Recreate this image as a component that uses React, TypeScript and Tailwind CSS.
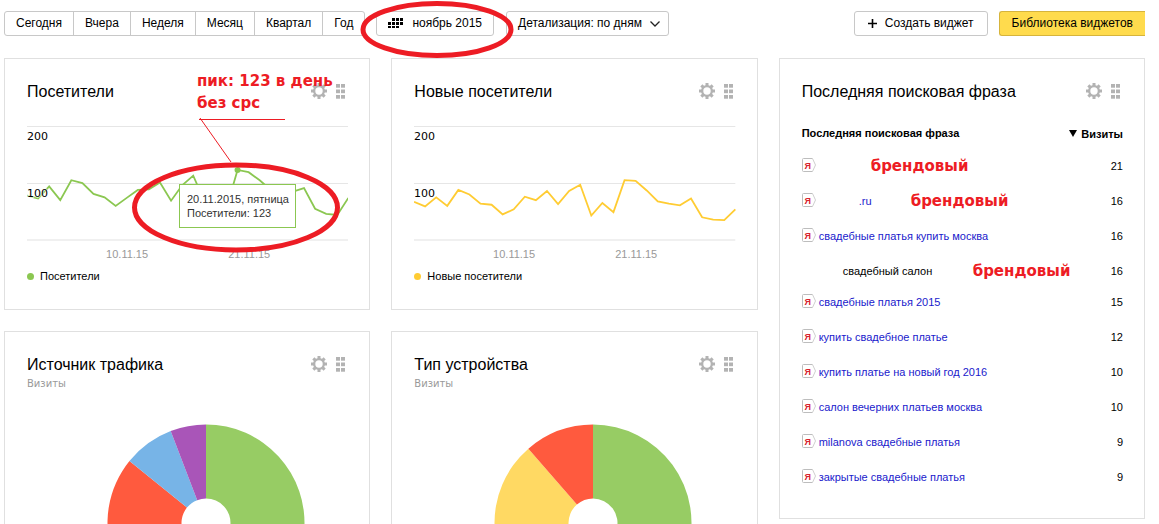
import React from 'react';
import type { ReactNode } from 'react';

const periods = ['Сегодня', 'Вчера', 'Неделя', 'Месяц', 'Квартал', 'Год'];

const visitors = [
  78, 73, 94, 70, 105, 100, 81, 75, 60, 74, 88, 89, 101, 69, 96,
  113, 69, 60, 56, 123, 119, 105, 88, 80, 85, 91, 55, 46, 44, 74,
];

const newVisitors = [
  67, 59, 75, 60, 88, 80, 64, 62, 45, 54, 76, 70, 86, 63, 86,
  97, 43, 65, 49, 105, 104, 87, 68, 64, 61, 73, 40, 36, 35, 54,
];

const sources = [
  { from: 0, to: 190, color: '#97cc64' },
  { from: 190, to: 309, color: '#ff5a3e' },
  { from: 309, to: 339, color: '#77b4e7' },
  { from: 339, to: 360, color: '#a955b8' },
];

const devices = [
  { from: 0, to: 215, color: '#97cc64' },
  { from: 215, to: 319, color: '#ffd963' },
  { from: 319, to: 360, color: '#ff5a3e' },
];

const Gear = () => (
  <svg width="16" height="16" viewBox="0 0 16 16">
    <g fill="#b3b3b3">
      {[0, 45, 90, 135].map((a) => (
        <rect key={a} x="6.5" y="0" width="3" height="16" transform={`rotate(${a} 8 8)`} />
      ))}
      <circle cx="8" cy="8" r="6" />
    </g>
    <circle cx="8" cy="8" r="3.7" fill="#fff" />
  </svg>
);

const Dots = () => (
  <svg width="9" height="15" viewBox="0 0 9 15" fill="#b3b3b3">
    {[0, 5.5, 11].map((y) => (
      <g key={y}>
        <rect x="0" y={y} width="4" height="3.7" />
        <rect x="5" y={y} width="4" height="3.7" />
      </g>
    ))}
  </svg>
);

const Yandex = () => (
  <svg className="block shrink-0" width="14" height="14" viewBox="0 0 14 14">
    <path d="M10.5 13.5H1.5a1 1 0 0 1-1-1v-11a1 1 0 0 1 1-1h9" fill="#fff" stroke="#bdbdbd" />
    <path d="M10.5 .5l3 6.5-3 6.5" fill="none" stroke="#cfcfcf" />
    <text x="5.8" y="10.5" fontSize="9" fontWeight="bold" fill="#d8232f" textAnchor="middle">Я</text>
  </svg>
);

const Card = ({ title, subtitle, height, children }: { title: string; subtitle?: string; height: string; children: ReactNode }) => (
  <section className={`relative border border-[#e0e0e0] pl-[22px] pr-[21px] pt-5 ${height}`}>
    <div className="flex h-6 items-center justify-between">
      <h2 className="whitespace-nowrap pt-0.5 text-[16px] leading-6">{title}</h2>
      <div className="flex items-center gap-[9px] pr-[3px]">
        <button type="button" aria-label="Настройки">
          <Gear />
        </button>
        <button type="button" aria-label="Переместить">
          <Dots />
        </button>
      </div>
    </div>
    {subtitle && <p className="font-['DejaVu_Sans',sans-serif] text-[10px] leading-4 text-[#999]">{subtitle}</p>}
    {children}
  </section>
);

const LineChart = ({ data, color, peak }: { data: number[]; color: string; peak?: number }) => {
  const px = (i: number) => i * 11.07;
  const py = (v: number) => 115 - v * 0.57;
  return (
    <svg className="mt-[22px] block w-full" viewBox="0 0 321 136">
      <path d="M0 1.5H321M0 58.5H321" stroke="#e6e6e6" />
      <path d="M0 115H321" stroke="#f0f0f0" strokeWidth="2" />
      <polyline
        points={data.map((v, i) => `${px(i)},${py(v)}`).join(' ')}
        fill="none"
        stroke={color}
        strokeWidth="1.8"
      />
      {peak !== undefined && <circle cx={px(peak)} cy={py(data[peak])} r="3" fill={color} />}
      <g fontFamily="DejaVu Sans, sans-serif" fontSize="11" stroke="#fff" strokeWidth="2" strokeOpacity="0.6" paintOrder="stroke">
        <text x="0" y="15">200</text>
        <text x="0" y="72">100</text>
      </g>
      <g fontSize="11" fill="#999" textAnchor="middle">
        <text x="100" y="133">10.11.15</text>
        <text x="222" y="133">21.11.15</text>
      </g>
    </svg>
  );
};

const Legend = ({ color, label }: { color: string; label: string }) => (
  <div className="mt-[7px] flex items-center gap-[6px] text-[11px] leading-4">
    <svg width="7" height="7">
      <circle cx="3.5" cy="3.5" r="3.5" fill={color} />
    </svg>
    {label}
  </div>
);

const Donut = ({ parts }: { parts: { from: number; to: number; color: string }[] }) => {
  const at = (deg: number, r: number) => {
    const a = (deg * Math.PI) / 180;
    return `${99 + r * Math.sin(a)} ${99 - r * Math.cos(a)}`;
  };
  return (
    <svg className="ml-20 mt-8 block" width="198" height="198" viewBox="0 0 198 198">
      {parts.map((p) => {
        const large = p.to - p.from > 180 ? 1 : 0;
        return (
          <path
            key={p.from}
            fill={p.color}
            d={`M${at(p.from, 98.5)}A98.5 98.5 0 ${large} 1 ${at(p.to, 98.5)}L${at(p.to, 24.5)}A24.5 24.5 0 ${large} 0 ${at(p.from, 24.5)}Z`}
          />
        );
      })}
    </svg>
  );
};

const Note = ({ children, place }: { children: ReactNode; place: string }) => (
  <span className={`absolute whitespace-nowrap font-['DejaVu_Sans',sans-serif] text-[15px] font-bold leading-[22px] text-[#ed1c24] ${place}`}>
    {children}
  </span>
);

const Phrase = ({ text, visits }: { text: string; visits: number }) => (
  <tr className="h-[35px] align-top">
    <td>
      <div className="flex items-start gap-[3px]">
        <Yandex />
        <a href="#" className="text-[#1a1acc]">{text}</a>
      </div>
    </td>
    <td className="text-right">{visits}</td>
  </tr>
);

const App = () => {
  return (
    <div className="bg-white pl-1 pr-[14px] pt-[11px] font-['Liberation_Sans',Arial,sans-serif] text-black">
      {/* toolbar */}
      <div className="flex h-[25px] whitespace-nowrap text-[12px] leading-[23px]">
        <div className="flex rounded-[3px] border border-[#c8c8c8]">
          {periods.map((p) => (
            <button key={p} type="button" className="border-r border-[#c8c8c8] px-[11px] last:border-r-0">
              {p}
            </button>
          ))}
        </div>
        <div className="relative ml-[11px] flex">
          <button type="button" className="flex items-center gap-[9px] rounded-[3px] border border-[#c8c8c8] px-[11px]">
            <svg width="15" height="11" viewBox="0 0 15 11">
              {[4, 8, 12].map((x) => <rect key={x} x={x} y="0" width="3" height="3" />)}
              {[0, 4, 8, 12].map((x) => <rect key={x} x={x} y="4" width="3" height="3" />)}
              {[0, 4, 8].map((x) => <rect key={x} x={x} y="8" width="3" height="2" />)}
            </svg>
            ноябрь 2015
          </button>
          <svg className="pointer-events-none absolute -left-4 -top-[11px] z-10" width="154" height="59" fill="none">
            <ellipse cx="77" cy="29.5" rx="74" ry="26" stroke="#ed1c24" strokeWidth="5" />
          </svg>
        </div>
        <button type="button" className="ml-3 flex items-center gap-2 rounded-[3px] border border-[#c8c8c8] pl-[11px] pr-2">
          Детализация: по дням
          <svg width="10" height="6" viewBox="0 0 10 6" fill="none" stroke="#222" strokeWidth="1.3">
            <path d="M.5 .5L5 5 9.500 .5" />
          </svg>
        </button>
        <button type="button" className="ml-auto flex items-center gap-2 rounded-[3px] border border-[#c8c8c8] px-[13px]">
          <svg width="9" height="9" viewBox="0 0 9 9" stroke="#000" strokeWidth="1.6">
            <path d="M4.500 0V9M0 4.500H9" />
          </svg>
          Создать виджет
        </button>
        <button type="button" className="ml-[11px] rounded-l-[3px] border border-r-0 border-[#d6b43c] bg-[#ffdb4d] px-3">
          Библиотека виджетов
        </button>
      </div>

      {/* widgets */}
      <div className="mt-[22px] grid grid-cols-3 items-start gap-[21px]">
        <div className="flex flex-col gap-[21px]">
          <Card title="Посетители" height="h-[252px]">
            <LineChart data={visitors} color="#8bc751" peak={19} />
            <Legend color="#8bc751" label="Посетители" />
            <div className="absolute left-[174px] top-[125px] border border-[#8bc751] bg-white py-[7px] pl-[7px] pr-[6px] text-[11px] leading-[14px] whitespace-nowrap text-[#333]">
              <p>20.11.2015, пятница</p>
              <p>Посетители: 123</p>
            </div>
            <svg className="pointer-events-none absolute left-[124px] top-[56px]" width="214" height="142" fill="none" stroke="#ed1c24">
              <ellipse cx="107" cy="92.5" rx="101.5" ry="42.5" strokeWidth="5" />
              <path d="M70 4.500H156M71 3l31 44" />
            </svg>
            <Note place="left-[192px] top-[11px]">
              пик: 123 в день
              <br />
              без срс
            </Note>
          </Card>
          <Card title="Источник трафика" subtitle="Визиты" height="h-[330px]">
            <Donut parts={sources} />
          </Card>
        </div>

        <div className="flex flex-col gap-[21px]">
          <Card title="Новые посетители" height="h-[252px]">
            <LineChart data={newVisitors} color="#ffcc33" />
            <Legend color="#ffcc33" label="Новые посетители" />
          </Card>
          <Card title="Тип устройства" subtitle="Визиты" height="h-[330px]">
            <Donut parts={devices} />
          </Card>
        </div>

        <Card title="Последняя поисковая фраза" height="pb-[14px]">
          <table className="mt-[22px] w-full text-[11px] leading-4">
            <thead>
              <tr className="h-[33px] align-top">
                <th className="text-left">Последняя поисковая фраза</th>
                <th className="text-right">
                  <span className="inline-flex items-center gap-1">
                    <svg width="8" height="7">
                      <path d="M0 0h8L4 7z" />
                    </svg>
                    Визиты
                  </span>
                </th>
              </tr>
            </thead>
            <tbody>
              <tr className="h-[35px] align-top">
                <td className="relative">
                  <Yandex />
                  <Note place="left-[69px] -top-[3px]">брендовый</Note>
                </td>
                <td className="text-right">21</td>
              </tr>
              <tr className="h-[35px] align-top">
                <td className="relative">
                  <div className="flex items-start gap-[43px]">
                    <Yandex />
                    <a href="#" className="text-[#1a1acc]">.ru</a>
                  </div>
                  <Note place="left-[109px] -top-[3px]">брендовый</Note>
                </td>
                <td className="text-right">16</td>
              </tr>
              <Phrase text="свадебные платья купить москва" visits={16} />
              <tr className="h-[31px] align-top">
                <td className="relative pl-[41px]">
                  свадебный салон
                  <Note place="left-[171px] -top-[3px]">брендовый</Note>
                </td>
                <td className="text-right">16</td>
              </tr>
              <Phrase text="свадебные платья 2015" visits={15} />
              <Phrase text="купить свадебное платье" visits={12} />
              <Phrase text="купить платье на новый год 2016" visits={10} />
              <Phrase text="салон вечерних платьев москва" visits={10} />
              <Phrase text="milanova свадебные платья" visits={9} />
              <Phrase text="закрытые свадебные платья" visits={9} />
            </tbody>
          </table>
        </Card>
      </div>
    </div>
  );
};

export default App;
